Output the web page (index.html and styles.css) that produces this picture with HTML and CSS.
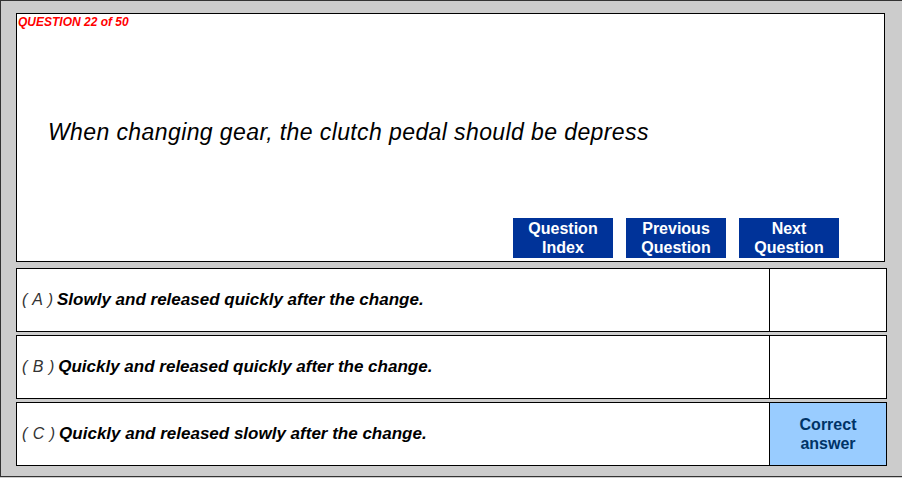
FILE: index.html
```html
<!DOCTYPE html>
<html lang="en">
<head>
  <meta charset="UTF-8" />
  <title>Question 22 of 50</title>
  <link rel="stylesheet" href="styles.css">
</head>
<body>
  <div class="frame">
    <div class="question-panel">
      <div class="counter">QUESTION 22 of 50</div>
      <div class="question-text">When changing gear, the clutch pedal should be depress</div>
      <div class="nav">
        <button class="nav-btn">Question<br>Index</button>
        <button class="nav-btn">Previous<br>Question</button>
        <button class="nav-btn">Next<br>Question</button>
      </div>
    </div>

    <div class="answer">
      <div class="answer-text"><span class="letter">( A )</span> Slowly and released quickly after the change.</div>
      <div class="answer-mark"></div>
    </div>
    <div class="answer">
      <div class="answer-text"><span class="letter">( B )</span> Quickly and released quickly after the change.</div>
      <div class="answer-mark"></div>
    </div>
    <div class="answer">
      <div class="answer-text"><span class="letter">( C )</span> Quickly and released slowly after the change.</div>
      <div class="answer-mark correct">Correct<br>answer</div>
    </div>
  </div>
</body>
</html>
```

FILE: styles.css
```css
body {
  margin: 0;
  background-color: #cccccc;
  font-family: "Liberation Sans", Arial, sans-serif;
  overflow: hidden;
}

.frame {
  box-sizing: border-box;
  height: 477px;
  width: 910px;
  border: 1px solid #333333;
  background-color: #cccccc;
  padding: 12px 0 0 15px;
  display: flex;
  flex-direction: column;
}

.question-panel {
  box-sizing: border-box;
  width: 869px;
  height: 249px;
  background: #ffffff;
  border: 1px solid #000000;
  display: flex;
  flex-direction: column;
}

.counter {
  color: #ff0000;
  font-size: 12px;
  font-weight: bold;
  font-style: italic;
  line-height: 14px;
  padding: 1px 0 0 1px;
}

.question-text {
  font-size: 23px;
  font-style: italic;
  letter-spacing: 0.4px;
  line-height: 26px;
  margin-top: 90px;
  padding-left: 31px;
  color: #000000;
}

.nav {
  margin-top: auto;
  display: flex;
  justify-content: flex-end;
  gap: 13px;
  padding: 0 45px 3px 0;
}

.nav-btn {
  width: 100px;
  height: 40px;
  padding: 0;
  border: none;
  background: #003399;
  color: #ffffff;
  font-family: "Liberation Sans", Arial, sans-serif;
  font-size: 16px;
  font-weight: bold;
  line-height: 19px;
  text-align: center;
  cursor: pointer;
}

.answer {
  box-sizing: border-box;
  width: 871px;
  height: 64px;
  margin-top: 6px;
  background: #ffffff;
  border: 1px solid #000000;
  display: flex;
}

.answer + .answer {
  margin-top: 3px;
}

.answer-text {
  flex: 1;
  display: flex;
  align-items: center;
  gap: 4px;
  padding-left: 5px;
  font-size: 17px;
  font-weight: bold;
  font-style: italic;
}

.letter {
  font-weight: normal;
  font-size: 16px;
  color: #333333;
  word-spacing: 1px;
}

.answer-mark {
  width: 116px;
  border-left: 1px solid #000000;
  display: flex;
  align-items: center;
  justify-content: center;
  text-align: center;
  font-size: 16px;
  font-weight: bold;
  line-height: 19px;
}

.answer-mark.correct {
  background: #99ccff;
  color: #003366;
}
```
